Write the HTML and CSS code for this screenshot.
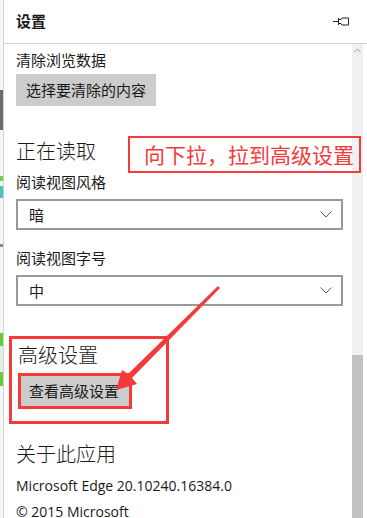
FILE: index.html
```html
<!DOCTYPE html>
<html lang="zh-CN">
<head>
<meta charset="utf-8">
<title>设置</title>
<link rel="stylesheet" href="styles.css">
</head>
<body>
<div class="frame">
  <div class="edge"></div>
  <div class="panel">
    <header class="header">
      <h1 class="title">设置</h1>
      <svg class="pin" width="17" height="9" viewBox="0 0 17 9">
        <path d="M0 4.5 H5.5 M5.5 1 V8 M5.5 2.5 H8 L9 1 H15.5 V8 H9 L8 6.5 H5.5" fill="none" stroke="#222" stroke-width="1"/>
      </svg>
    </header>
    <div class="body">
      <main class="content">
        <p class="label first">清除浏览数据</p>
        <button class="btn">选择要清除的内容</button>

        <h2 class="heading reading">正在读取</h2>
        <p class="label">阅读视图风格</p>
        <div class="select">
          <span>暗</span>
          <svg class="chev" width="12" height="7" viewBox="0 0 12 7"><path d="M0.5 0.5 L6 6 L11.5 0.5" fill="none" stroke="#555" stroke-width="1"/></svg>
        </div>
        <p class="label second">阅读视图字号</p>
        <div class="select">
          <span>中</span>
          <svg class="chev" width="12" height="7" viewBox="0 0 12 7"><path d="M0.5 0.5 L6 6 L11.5 0.5" fill="none" stroke="#555" stroke-width="1"/></svg>
        </div>

        <section class="advanced">
          <h2 class="heading">高级设置</h2>
          <div class="mark">
            <button class="btn small">查看高级设置</button>
          </div>
        </section>

        <h2 class="heading about">关于此应用</h2>
        <p class="info">Microsoft Edge 20.10240.16384.0</p>
        <p class="info copy">© 2015 Microsoft</p>
      </main>
      <div class="scrollbar">
        <div class="track">
          <svg class="up" width="7" height="5" viewBox="0 0 7 5"><path d="M0.5 4 L3.5 1 L6.5 4" fill="none" stroke="#9a9a9a" stroke-width="1"/></svg>
        </div>
        <div class="thumb"></div>
      </div>
    </div>
  </div>

  <div class="note">向下拉，拉到高级设置</div>
  <svg class="arrow" width="367" height="518" viewBox="0 0 367 518">
    <polygon points="116,390 122,370 128,374 218,286 220,288 132,378 137,384" fill="#f43a3a"/>
  </svg>
</div>
</body>
</html>
```

FILE: styles.css
```css
* { box-sizing: border-box; }

html, body {
  margin: 0;
  padding: 0;
  background: #ffffff;
}

body {
  width: 367px;
  height: 518px;
  overflow: hidden;
  font-family: "Noto Sans CJK SC", "Open Sans", sans-serif;
  color: #1a1a1a;
}

.frame {
  position: relative;
  display: flex;
  width: 367px;
  height: 518px;
}

.edge {
  width: 4px;
  flex: none;
  border-right: 1px solid #d2d2d2;
  background: linear-gradient(to bottom,
    #f7f7f7 0, #f7f7f7 90px,
    #6b6b6b 90px, #6b6b6b 130px,
    #f7f7f7 130px, #f7f7f7 176px,
    #6fcf4a 176px, #6fcf4a 181px,
    #f7f7f7 181px, #f7f7f7 186px,
    #41c8c0 186px, #41c8c0 198px,
    #f7f7f7 198px, #f7f7f7 244px,
    #8a8a8a 244px, #8a8a8a 247px,
    #f7f7f7 247px, #f7f7f7 333px,
    #66cc33 333px, #66cc33 346px,
    #e6f0e0 346px, #e6f0e0 372px,
    #66cc33 372px, #66cc33 386px,
    #f7f7f7 386px);
}

.panel {
  flex: 1;
  display: flex;
  flex-direction: column;
  min-width: 0;
}

.header {
  height: 44px;
  flex: none;
  display: flex;
  align-items: center;
  justify-content: space-between;
  padding: 0 17px 0 12px;
  border-bottom: 1px solid #cfcfcf;
}

.title {
  margin: 0;
  font-size: 15px;
  font-weight: bold;
  line-height: 20px;
  padding-bottom: 1px;
}

.pin { display: block; margin-top: 0; }

.body {
  flex: 1;
  display: flex;
  min-height: 0;
}

.content {
  flex: 1;
  padding: 6px 0 0 12px;
  min-width: 0;
}

.label {
  margin: 0;
  font-size: 15px;
  line-height: 20px;
}

.first { margin-top: 0; }

.btn {
  display: inline-block;
  margin: 0;
  border: none;
  background: #cccccc;
  font-family: "Noto Sans CJK SC", sans-serif;
  font-size: 15px;
  color: #1a1a1a;
  height: 32px;
  line-height: 32px;
  padding: 0 10px;
  margin-top: 4px;
}

.heading {
  margin: 0;
  font-size: 20px;
  font-weight: 300;
  line-height: 28px;
}

.reading { margin-top: 31px; }

.reading + .label { margin-top: 7px; }

.select {
  width: 327px;
  height: 31px;
  margin-top: 7px;
  border: 2px solid #999999;
  display: flex;
  align-items: center;
  justify-content: space-between;
  padding: 0 9px 0 11px;
  font-size: 15px;
}

.chev { display: block; }

.second { margin-top: 18px; }

.advanced {
  width: 160px;
  margin: 30px 0 0 -7px;
  padding: 2px 0 12px 6px;
  border: 3px solid #f43a3a;
}

.mark {
  display: inline-block;
  margin-top: 4px;
  border: 3px solid #f43a3a;
}

.btn.small {
  margin: 0;
  height: 30px;
  line-height: 30px;
  padding: 0 10px 0 8px;
}

.about { margin-top: 16px; }

.info {
  margin: 0;
  font-family: "Open Sans", sans-serif;
  font-size: 14px;
  line-height: 26px;
}

.about + .info { margin-top: 5px; }

.scrollbar {
  width: 11px;
  flex: none;
  margin-right: 4px;
  display: flex;
  flex-direction: column;
}

.track {
  height: 311px;
  background: #f0f0f0;
  display: flex;
  justify-content: center;
  padding-top: 4px;
}

.up { display: block; }

.thumb {
  flex: 1;
  background: #c2c2c2;
}

.note {
  position: absolute;
  left: 128px;
  top: 136px;
  width: 233px;
  height: 37px;
  border: 2px solid #f43a3a;
  color: #f43a3a;
  font-size: 21px;
  line-height: 33px;
  padding-left: 14px;
  white-space: nowrap;
}

.arrow {
  position: absolute;
  left: 0;
  top: 0;
  pointer-events: none;
}
```
